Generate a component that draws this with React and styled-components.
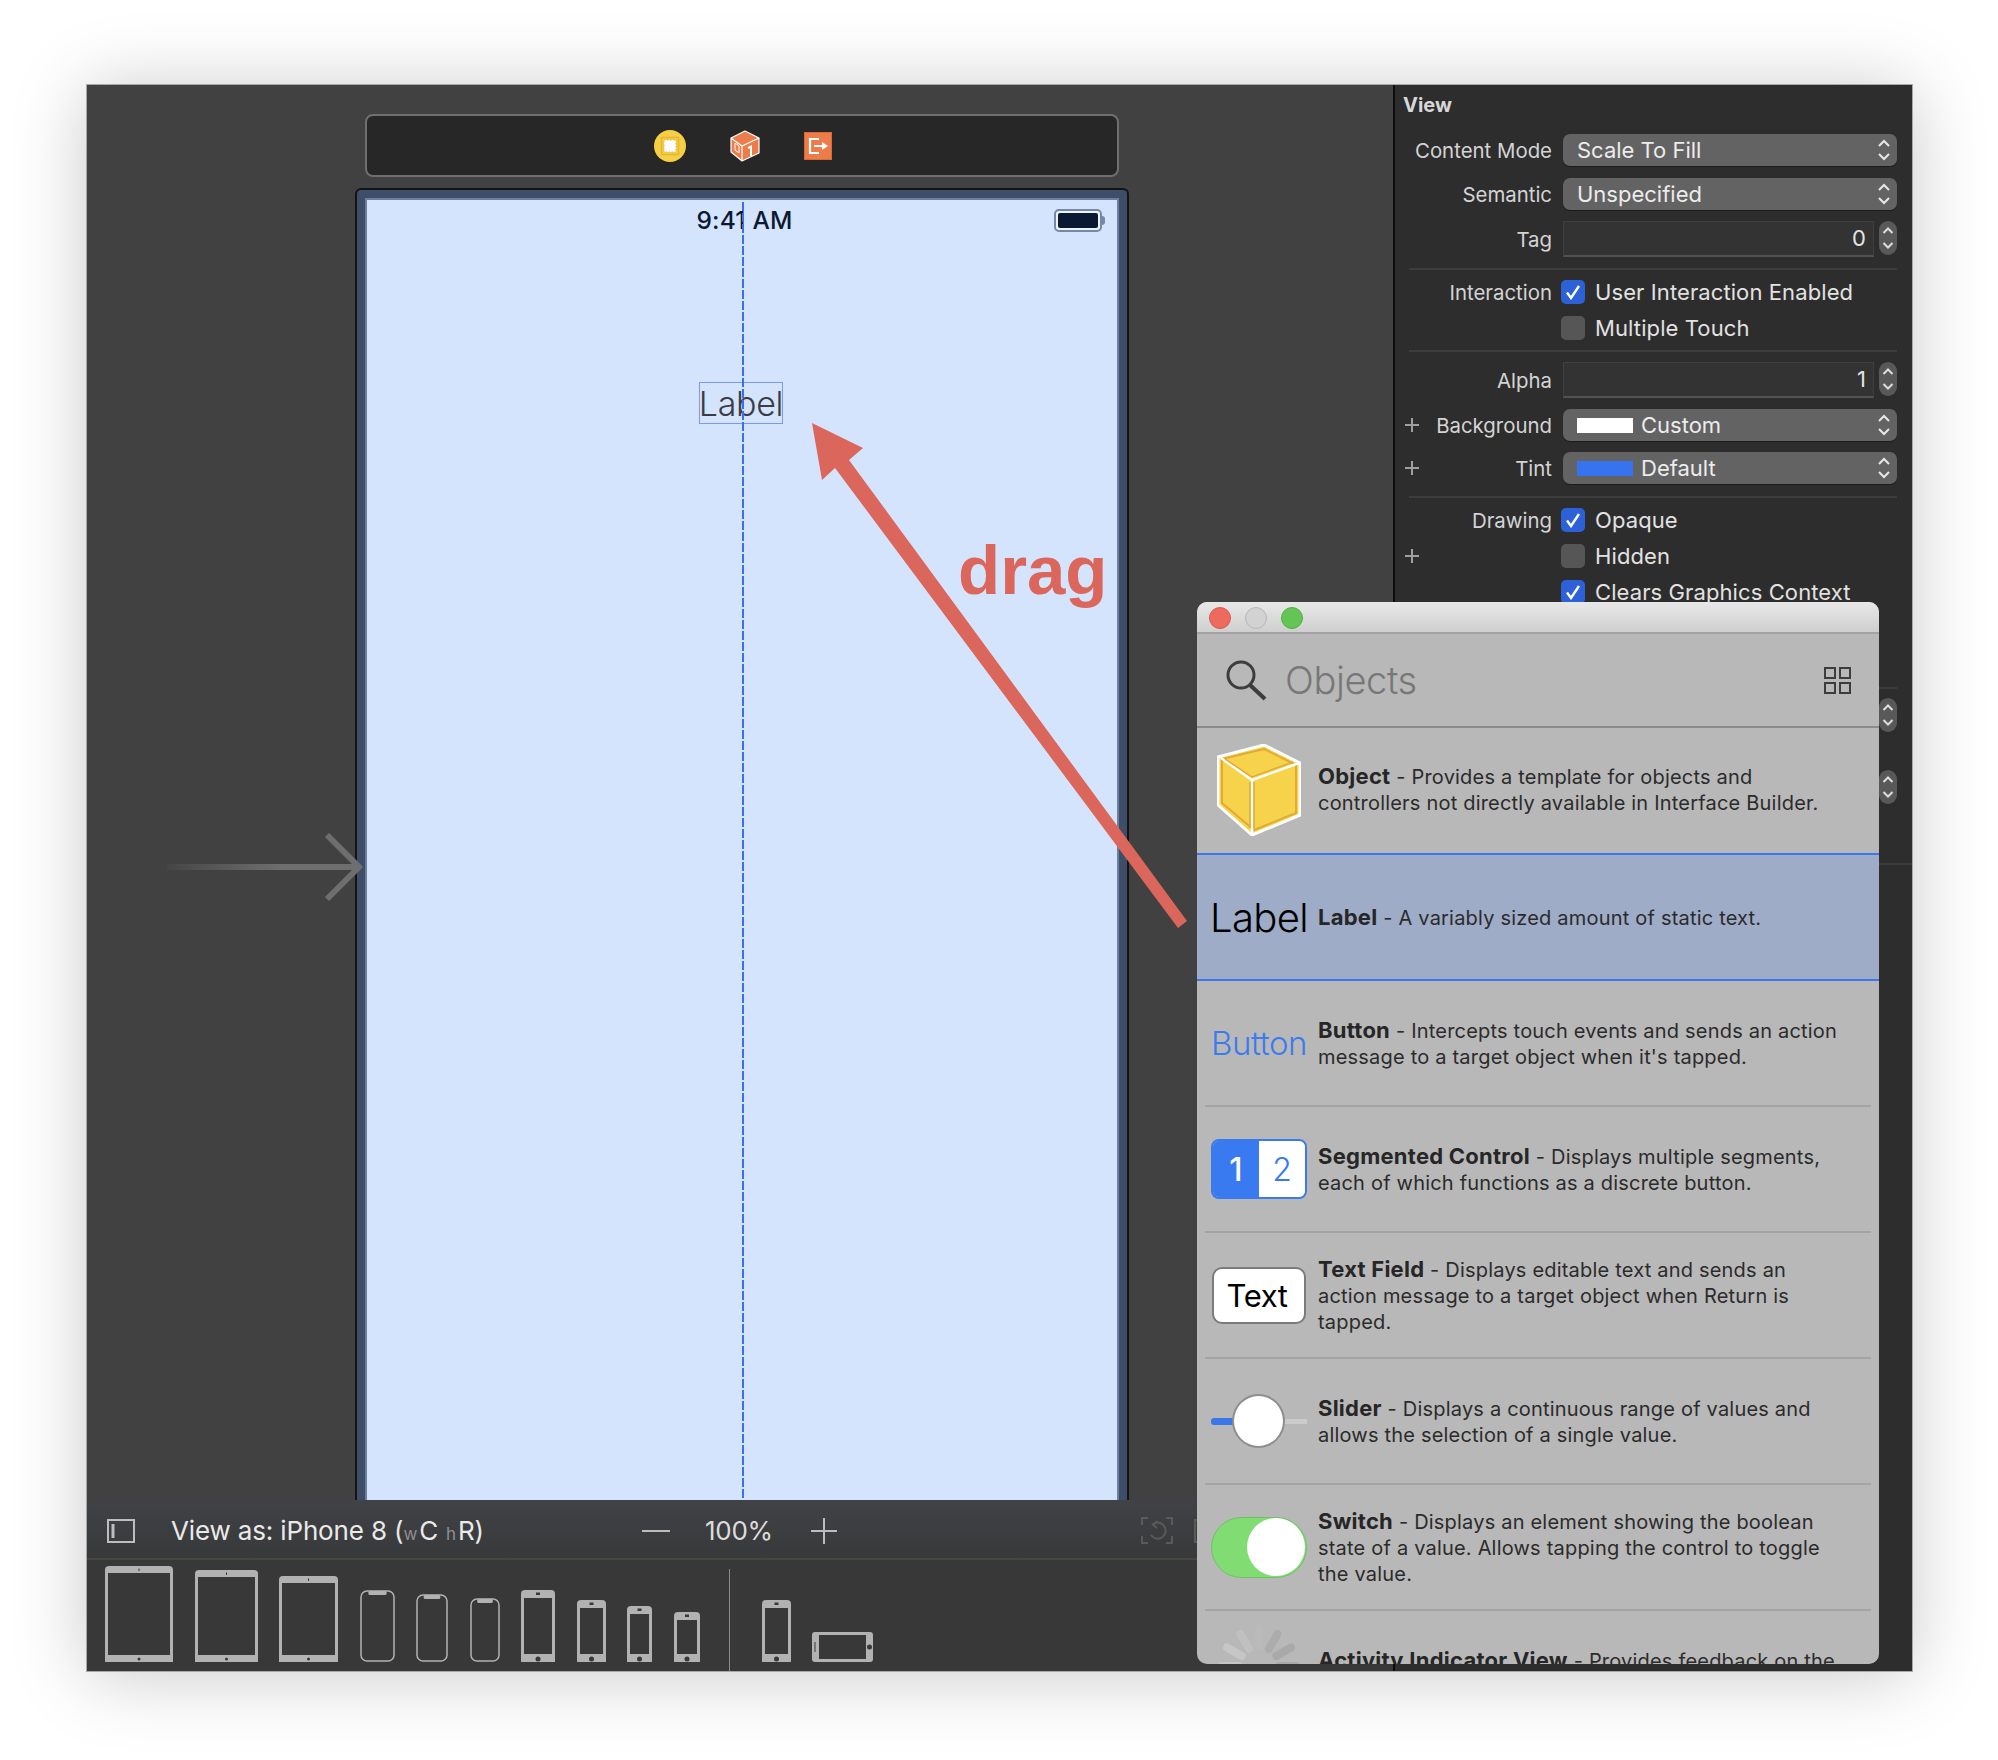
import React from 'react';
import styled, { createGlobalStyle } from 'styled-components';

const GlobalStyle = createGlobalStyle`
  html, body { margin: 0; padding: 0; background: #fff; }
  body { font-family: Inter, "Noto Sans", sans-serif; width: 1998px; height: 1760px; overflow: hidden; }
`;

const Page = styled.div`
  width: 1998px;
  height: 1760px;
  padding: 85px 0 0 87px;
  box-sizing: border-box;
`;

const Window = styled.div`
  position: relative;
  width: 1825px;
  height: 1586px;
  display: flex;
  box-shadow: 0 0 0 1px #a8a8a8, 0 4px 70px rgba(0, 0, 0, 0.22);
`;

/* canvas */
const Canvas = styled.div`
  width: 1306px;
  display: flex;
  flex-direction: column;
  background: #414141;
  border-right: 2px solid #0c0c0c;
`;

const Stage = styled.div`
  position: relative;
  flex: 1;
  min-height: 0;
  overflow: hidden;
  padding: 29px 0 0 268px;
  display: flex;
  flex-direction: column;
`;

const Dock = styled.div`
  box-sizing: border-box;
  width: 754px;
  height: 63px;
  margin-left: 10px;
  background: #272727;
  border: 2px solid #6f6f6f;
  border-radius: 8px;
  display: flex;
  align-items: center;
  justify-content: center;
  gap: 44px;
  padding-left: 1px;
`;

const Phone = styled.div`
  flex: 1;
  box-sizing: border-box;
  width: 774px;
  margin-top: 11px;
  background: #3f4e68;
  border: 2px solid #141414;
  border-bottom: 0;
  border-radius: 6px 6px 0 0;
  padding: 8px 8px 0;
  display: flex;
`;

const Screen = styled.div`
  position: relative;
  flex: 1;
  background: #d5e4fd;
  border: 2px solid #6d7f9f;
  border-bottom: 0;
  display: flex;
  justify-content: center;
`;

const StatusTime = styled.div`
  margin: 6px 0 0 5px;
  font-size: 24.5px;
  line-height: 28px;
  font-weight: 500;
  color: #0b1a33;
  letter-spacing: 0.2px;
`;

const Battery = styled.div`
  position: absolute;
  top: 9px;
  right: 15px;
  box-sizing: border-box;
  width: 48px;
  height: 23px;
  border: 2px solid #7688a8;
  border-radius: 5px;
  padding: 2px;
  background: #eef3fd;
  &::before {
    content: '';
    display: block;
    height: 100%;
    background: #0b1a33;
    border-radius: 2px;
  }
  &::after {
    content: '';
    position: absolute;
    top: 5px;
    right: -5px;
    width: 3px;
    height: 9px;
    background: #7688a8;
    border-radius: 0 3px 3px 0;
  }
`;

const GuideLine = styled.div`
  position: absolute;
  top: 2px;
  bottom: 0;
  left: 375px;
  width: 2px;
  background: repeating-linear-gradient(to bottom, #3a6ff0 0 9px, transparent 9px 11px);
`;

const DroppedLabel = styled.div`
  position: absolute;
  top: 182px;
  left: 332px;
  box-sizing: border-box;
  width: 84px;
  height: 42px;
  border: 1.5px solid #7e96f5;
  display: flex;
  align-items: center;
  justify-content: center;
  font-size: 34px;
  font-weight: 300;
  color: #3a3d47;
  letter-spacing: -0.3px;
`;

const EntryArrow = styled.svg`
  position: absolute;
  left: 80px;
  top: 740px;
`;

/* bottom bar */
const BottomBar = styled.div`
  height: 171px;
  flex: none;
  display: flex;
  flex-direction: column;
  background: #383838;
`;

const ZoomBar = styled.div`
  height: 60px;
  flex: none;
  display: flex;
  align-items: center;
  padding: 3px 0 0 20px;
  box-sizing: border-box;
  background: linear-gradient(#414246, #38393a);
  border-bottom: 2px solid #45463f;
  color: #eaeaea;
`;

const ViewAs = styled.div`
  margin-left: 36px;
  font-size: 26px;
  width: 312px;
  white-space: nowrap;
  letter-spacing: -0.15px;
`;

const SizeClass = styled.span`
  font-size: 17px;
  color: #8d9094;
  margin: 0 2px 0 ${(p) => p.$left}px;
`;

const ZoomValue = styled.div`
  font-size: 26px;
  width: 67px;
  margin: 0 39px 0 35px;
  color: #dcdcdc;
  letter-spacing: -0.3px;
  text-align: center;
`;

const ZoomMinus = styled.div`
  margin-left: 159px;
  width: 28px;
  height: 2px;
  background: #bdbdbd;
`;

const ZoomPlus = styled.div`
  position: relative;
  width: 26px;
  height: 26px;
  &::before, &::after {
    content: '';
    position: absolute;
    background: #bdbdbd;
  }
  &::before { left: 0; right: 0; top: 12px; height: 2px; }
  &::after { top: 0; bottom: 0; left: 12px; width: 2px; }
`;

const Tray = styled.div`
  flex: 1;
  display: flex;
  align-items: flex-end;
  gap: 21.5px;
  padding: 0 0 9px 18px;
`;

const TraySeparator = styled.div`
  width: 1px;
  height: 102px;
  margin: 0 10px -9px 8px;
  background: #8a8a8a;
`;

/* inspector */
const Inspector = styled.div`
  position: relative;
  flex: 1;
  background: #2d2d2d;
  color: #dcdcdc;
  font-size: 20.4px;
  padding-right: 15px;
  display: flex;
  flex-direction: column;
`;

const InspectorTitle = styled.div`
  height: 40px;
  line-height: 40px;
  padding-left: 8px;
  font-size: 20px;
  font-weight: 700;
  color: #d8d8d8;
`;

const Row = styled.div`
  display: grid;
  grid-template-columns: 157px 334px;
  column-gap: 11px;
  align-items: center;
  height: ${(p) => p.$h}px;
  margin-top: ${(p) => p.$top}px;
`;

const RowLabel = styled.div`
  display: flex;
  justify-content: flex-end;
  align-items: center;
  position: relative;
  color: #d4d4d4;
  white-space: nowrap;
`;

const Plus = styled.span`
  position: absolute;
  left: 10px;
  top: 50%;
  margin-top: -7px;
  width: 14px;
  height: 14px;
  background:
    linear-gradient(#a0a0a0, #a0a0a0) center / 14px 2px no-repeat,
    linear-gradient(#a0a0a0, #a0a0a0) center / 2px 14px no-repeat;
`;

const Popup = styled.div`
  position: relative;
  height: 32px;
  background: #636363;
  border-radius: 7px;
  box-shadow: 0 1px 1px rgba(0, 0, 0, 0.4);
  padding-left: 14px;
  display: flex;
  align-items: center;
  gap: 8px;
  font-size: 22px;
  color: #ececec;
  svg { position: absolute; right: 7px; top: 5px; }
`;

const Swatch = styled.span`
  width: 56px;
  height: 15px;
  background: ${(p) => p.$color};
`;

const FieldRow = styled.div`
  display: flex;
  gap: 5px;
  height: 36px;
`;

const NumberField = styled.div`
  flex: 1;
  box-sizing: border-box;
  background: #333;
  border: 1px solid #3f3f3f;
  border-bottom: 2px solid #525252;
  text-align: right;
  padding-right: 7px;
  font-size: 22px;
  line-height: 33px;
  color: #e4e4e4;
`;

const Stepper = styled.div`
  width: 18px;
  height: 34px;
  background: #595959;
  border-radius: 9px;
  display: flex;
  align-items: center;
  justify-content: center;
`;

const FloatingStepper = styled(Stepper)`
  position: absolute;
  right: 15px;
  top: ${(p) => p.$top}px;
`;

const Divider = styled.div`
  margin: ${(p) => p.$top}px 0 0 14px;
  height: 2px;
  background: #3d3d3d;
`;

const EdgeRule = styled.div`
  position: absolute;
  left: 14px;
  right: ${(p) => p.$right}px;
  top: ${(p) => p.$top}px;
  height: 2px;
  background: #3d3d3d;
`;

const CheckWrap = styled.div`
  display: flex;
  align-items: center;
  gap: 10px;
  margin-left: -2px;
  font-size: 22px;
  letter-spacing: 0.1px;
  color: #e2e2e2;
  white-space: nowrap;
`;

const CheckBox = styled.span`
  width: 24px;
  height: 24px;
  flex: none;
  border-radius: 5px;
  background: ${(p) => (p.$on ? '#2c61d8' : '#565656')};
  display: flex;
  align-items: center;
  justify-content: center;
`;

/* objects library */
const Library = styled.div`
  position: absolute;
  left: 1110px;
  top: 517px;
  width: 682px;
  height: 1062px;
  background: #b8b8b8;
  border-radius: 10px;
  overflow: hidden;
  display: flex;
  flex-direction: column;
  font-family: Inter, sans-serif;
`;

const TitleBar = styled.div`
  flex: none;
  padding: 5px 0 0 12px;
  height: 25px;
  display: flex;
  gap: 14px;
  background: linear-gradient(#e8e8e8, #cfcfcf);
  border-bottom: 2px solid #a3a3a3;
`;

const Light = styled.span`
  width: 22px;
  height: 22px;
  border-radius: 50%;
  box-sizing: border-box;
  background: ${(p) => p.$color};
  border: 1px solid ${(p) => p.$edge};
`;

const SearchRow = styled.div`
  height: 92px;
  flex: none;
  display: flex;
  align-items: center;
  padding: 0 28px 0 28px;
  border-bottom: 2px solid #8b8b8b;
`;

const SearchText = styled.div`
  flex: 1;
  margin-left: 18px;
  font-size: 38px;
  font-weight: 300;
  color: #777;
  letter-spacing: -0.4px;
`;

const ObjectRow = styled.div`
  position: relative;
  height: ${(p) => p.$h}px;
  flex: none;
  display: grid;
  grid-template-columns: 96px 1fr;
  column-gap: 11px;
  align-items: center;
  padding-left: 14px;
  background: ${(p) => (p.$selected ? '#9eacc7' : 'transparent')};
  border-bottom: 2px solid ${(p) => (p.$selected ? '#3a78f0' : 'transparent')};
  border-top: ${(p) => (p.$selected ? '2px solid #3a78f0' : '0')};
  ${(p) =>
    p.$rule &&
    `&::after {
      content: '';
      position: absolute;
      left: 8px;
      right: 8px;
      bottom: -2px;
      height: 2px;
      background: #a4a4a4;
    }`}
`;

const Thumb = styled.div`
  display: flex;
  align-items: center;
  justify-content: center;
  width: 96px;
  min-height: 40px;
  white-space: nowrap;
`;

const BigLabel = styled.div`
  font-size: 40px;
  font-weight: 300;
  color: #000;
  letter-spacing: -0.6px;
`;

const BigButton = styled.div`
  font-size: 33px;
  font-weight: 300;
  color: #3b7bf0;
  letter-spacing: -0.4px;
`;

const Segments = styled.div`
  box-sizing: border-box;
  width: 96px;
  height: 60px;
  border: 2px solid #3a7af0;
  border-radius: 8px;
  overflow: hidden;
  display: flex;
  font-size: 32px;
`;

const Segment = styled.div`
  flex: 1;
  display: flex;
  align-items: center;
  justify-content: center;
  background: ${(p) => (p.$on ? '#3a7af0' : '#fff')};
  color: ${(p) => (p.$on ? '#fff' : '#3a7af0')};
  font-weight: ${(p) => (p.$on ? 500 : 300)};
`;

const TextBox = styled.div`
  box-sizing: border-box;
  width: 94px;
  height: 57px;
  border: 2px solid #7b7b7b;
  border-radius: 10px;
  padding-right: 4px;
  background: #fff;
  color: #000;
  font-size: 31px;
  display: flex;
  align-items: center;
  justify-content: center;
  letter-spacing: -0.4px;
`;

const SliderThumb = styled.div`
  position: relative;
  width: 96px;
  height: 54px;
  &::before {
    content: '';
    position: absolute;
    left: 0;
    top: 24px;
    width: 30px;
    height: 7px;
    background: #3a78e8;
    border-radius: 3px;
  }
  &::after {
    content: '';
    position: absolute;
    right: 0;
    top: 25px;
    width: 30px;
    height: 5px;
    background: #cbcbcb;
  }
`;

const SliderKnob = styled.div`
  position: absolute;
  z-index: 1;
  left: 21px;
  top: 0;
  box-sizing: border-box;
  width: 53px;
  height: 54px;
  border-radius: 50%;
  background: #fff;
  border: 2px solid #8e8e8e;
`;

const SwitchTrack = styled.div`
  box-sizing: border-box;
  width: 96px;
  height: 61px;
  border-radius: 31px;
  background: #82dc74;
  border: 1px solid #6fc262;
  display: flex;
  justify-content: flex-end;
  align-items: center;
  padding-right: 1px;
  &::after {
    content: '';
    width: 58px;
    height: 58px;
    border-radius: 50%;
    background: #fff;
  }
`;

const SpinnerSvg = styled.svg`
  margin-top: -14px;
`;

const Description = styled.div`
  font-size: 20px;
  line-height: 26px;
  color: #2b2b2b;
  letter-spacing: 0.2px;
  white-space: nowrap;
  b { font-size: 22px; font-weight: 700; color: #262626; letter-spacing: 0.25px; }
`;

const AnnotationLayer = styled.svg`
  position: absolute;
  left: 0;
  top: 0;
  pointer-events: none;
`;

const DragWord = styled.div`
  position: absolute;
  left: 871px;
  top: 446px;
  font-family: "Liberation Sans", Arial, sans-serif;
  font-weight: 700;
  font-size: 69px;
  line-height: 80px;
  color: #db665b;
`;

const Updown = () => (
  <svg width="12" height="22" viewBox="0 0 12 22" fill="none" stroke="#e8e8e8" strokeWidth="2">
    <path d="M1 7l5-5 5 5M1 15l5 5 5-5" />
  </svg>
);

const StepperGlyph = () => (
  <svg width="12" height="24" viewBox="0 0 12 24" fill="none" stroke="#dedede" strokeWidth="2">
    <path d="M1.5 7l4.5-4.5 4.5 4.5M1.5 17l4.5 4.5 4.5-4.5" />
  </svg>
);

const Tick = () => (
  <svg width="16" height="16" viewBox="0 0 16 16" fill="none" stroke="#fff" strokeWidth="2.4">
    <path d="M2 8.5l4 5.5 8-12" />
  </svg>
);

const Check = ({ on, children }) => (
  <CheckWrap>
    <CheckBox $on={on}>{on && <Tick />}</CheckBox>
    {children}
  </CheckWrap>
);

const SelectRow = ({ label, plus, top, children }) => (
  <Row $h={32} $top={top}>
    <RowLabel>{plus && <Plus />}{label}</RowLabel>
    <Popup>{children}<Updown /></Popup>
  </Row>
);

const NumberRow = ({ label, value, top }) => (
  <Row $h={36} $top={top}>
    <RowLabel>{label}</RowLabel>
    <FieldRow>
      <NumberField>{value}</NumberField>
      <Stepper><StepperGlyph /></Stepper>
    </FieldRow>
  </Row>
);

const CheckRow = ({ label, plus, on, top, children }) => (
  <Row $h={24} $top={top}>
    <RowLabel>{plus && <Plus />}{label}</RowLabel>
    <Check on={on}>{children}</Check>
  </Row>
);

const SceneIcon = () => (
  <svg width="32" height="32" viewBox="0 0 32 32">
    <circle cx="16" cy="16" r="16" fill="#f6cf45" />
    <rect x="7.5" y="7.5" width="17" height="17" fill="none" stroke="#e3b636" strokeWidth="1.5" />
    <rect x="10" y="10" width="12" height="12" fill="#fff" stroke="#e3b636" strokeDasharray="1.5 1.5" />
  </svg>
);

const CubeIcon = () => (
  <svg width="30" height="32" viewBox="0 0 30 32">
    <path d="M15 1L29 8V23L12 31 1 22V8Z" fill="#ec7d4a" stroke="#fff" strokeWidth="1.2" strokeLinejoin="round" />
    <path d="M1 8l11 8 17-8M12 16v15" fill="none" stroke="#fff" strokeWidth="1.2" />
    <path d="M5 13l4 3v7l-4-3z" fill="none" stroke="#fff" strokeWidth="1" />
    <path d="M18 18l3-1.500V26" fill="none" stroke="#fff" strokeWidth="2" />
  </svg>
);

const ExitIcon = () => (
  <svg width="28" height="28" viewBox="0 0 28 28">
    <rect x="0.500" y="0.500" width="27" height="27" fill="#ec7d4a" stroke="#d96a38" />
    <path d="M15 7H6v14h9M10 14h9" fill="none" stroke="#fff" strokeWidth="2.200" />
    <path d="M18 10l6 4-6 4z" fill="#fff" />
  </svg>
);

const Device = ({ w, h, kind }) => {
  const c = '#b2b2b2';
  if (kind === 'notch') {
    return (
      <svg width={w} height={h} viewBox={`0 0 ${w} ${h}`}>
        <rect x="1" y="1" width={w - 2} height={h - 2} rx="6" fill="none" stroke={c} strokeWidth="1.500" />
        <rect x={w * 0.24} y="1" width={w * 0.52} height="4" rx="1.500" fill={c} />
      </svg>
    );
  }
  if (kind === 'land') {
    return (
      <svg width={w} height={h} viewBox={`0 0 ${w} ${h}`}>
        <rect width={w} height={h} rx="3" fill={c} />
        <rect x="7" y="3" width={w - 14} height={h - 6} fill="#383838" />
        <rect x="2.500" y={h / 2 - 5} width="1" height="10" fill="#383838" />
        <circle cx={w - 3.500} cy={h / 2} r="2.500" fill="#383838" />
      </svg>
    );
  }
  const tablet = kind === 'tablet';
  const band = tablet ? 7 : 8;
  return (
    <svg width={w} height={h} viewBox={`0 0 ${w} ${h}`}>
      <path d={`M4 0H${w - 4}Q${w} 0 ${w} 4V${h}H0V4Q0 0 4 0Z`} fill={c} />
      <rect x="3" y={band} width={w - 6} height={h - band * 2} fill="#383838" />
      {tablet
        ? <rect x={w / 2 - 0.500} y="2.500" width="1" height="2.500" fill="#383838" />
        : <rect x={w / 2 - 2} y="2.500" width="4" height="2.500" fill="#383838" />}
      <circle cx={w / 2} cy={h - 3} r={tablet ? 1.500 : 2.500} fill="#383838" />
    </svg>
  );
};

const devices = [
  { w: 68, h: 96, kind: 'tablet' },
  { w: 63, h: 92, kind: 'tablet' },
  { w: 59, h: 86, kind: 'tablet' },
  { w: 35, h: 72, kind: 'notch' },
  { w: 32, h: 68, kind: 'notch' },
  { w: 30, h: 64, kind: 'notch' },
  { w: 34, h: 72, kind: 'phone' },
  { w: 29, h: 62, kind: 'phone' },
  { w: 25, h: 56, kind: 'phone' },
  { w: 26, h: 50, kind: 'phone' },
];

const CubeThumb = () => (
  <svg width="84" height="92" viewBox="0 0 84 92">
    <path d="M47 1L83 19V71L35 91 1 61V13Z" fill="#f7d34c" stroke="#fff" strokeWidth="3" strokeLinejoin="round" />
    <path d="M47 5L79 21V69L37 86 5 59V15Z" fill="none" stroke="#e0aa35" strokeWidth="2" strokeLinejoin="round" />
    <path d="M4 14L35 36 82 19M35 36V90" fill="none" stroke="#fff" strokeWidth="2.500" />
    <path d="M8 15L35 33 76 18M37 38V84M33 38V84" fill="none" stroke="#e0aa35" strokeWidth="1.500" />
  </svg>
);

// only the top of the wheel shows, the rest is under the panel edge
const spinnerRays = { 0: '#bababa', 1: '#acacac', 2: '#a9a9a9', 3: '#a9a9a9', 9: '#c6c6c6', 10: '#c6c6c6', 11: '#c0c0c0' };

const Spinner = () => (
  <SpinnerSvg width="96" height="96" viewBox="-48 -48 96 96" strokeWidth="8" strokeLinecap="round">
    {Array.from({ length: 12 }).map((_, i) => (
      <line
        key={i}
        x1="0"
        y1="-20"
        x2="0"
        y2="-37"
        stroke={spinnerRays[i] || '#bcbcbc'}
        transform={`rotate(${i * 30})`}
      />
    ))}
  </SpinnerSvg>
);

const items = [
  { h: 123, thumb: <CubeThumb />, name: 'Object', lines: ['Provides a template for objects and', 'controllers not directly available in Interface Builder.'] },
  { h: 124, thumb: <BigLabel>Label</BigLabel>, name: 'Label', selected: true, lines: ['A variably sized amount of static text.'] },
  { h: 124, thumb: <BigButton>Button</BigButton>, name: 'Button', rule: true, lines: ['Intercepts touch events and sends an action', "message to a target object when it's tapped."] },
  {
    h: 124,
    thumb: <Segments><Segment $on>1</Segment><Segment>2</Segment></Segments>,
    name: 'Segmented Control',
    rule: true,
    lines: ['Displays multiple segments,', 'each of which functions as a discrete button.'],
  },
  { h: 124, thumb: <TextBox>Text</TextBox>, name: 'Text Field', rule: true, lines: ['Displays editable text and sends an', 'action message to a target object when Return is', 'tapped.'] },
  { h: 124, thumb: <SliderThumb><SliderKnob /></SliderThumb>, name: 'Slider', rule: true, lines: ['Displays a continuous range of values and', 'allows the selection of a single value.'] },
  { h: 124, thumb: <SwitchTrack />, name: 'Switch', rule: true, lines: ['Displays an element showing the boolean', 'state of a value. Allows tapping the control to toggle', 'the value.'] },
  { h: 124, thumb: <Spinner />, name: 'Activity Indicator View', lines: ['Provides feedback on the', 'progress of a task or process of unknown duration.'] },
];

const App = () => (
  <Page>
    <GlobalStyle />
    <Window>
      <Canvas>
        <Stage>
          <Dock>
            <SceneIcon />
            <CubeIcon />
            <ExitIcon />
          </Dock>
          <Phone>
            <Screen>
              <StatusTime>9:41 AM</StatusTime>
              <Battery />
              <DroppedLabel>Label</DroppedLabel>
              <GuideLine />
            </Screen>
          </Phone>
          <EntryArrow width="200" height="80" viewBox="0 0 200 80">
            <defs>
              <linearGradient id="entry" x1="0" x2="1" y1="0" y2="0">
                <stop offset="0" stopColor="#6e6e6e" stopOpacity="0.1" />
                <stop offset="0.6" stopColor="#6e6e6e" />
              </linearGradient>
            </defs>
            <rect x="0" y="39" width="190" height="6" fill="url(#entry)" />
            <path d="M160 10L192 42 160 74" fill="none" stroke="#6e6e6e" strokeWidth="6" />
          </EntryArrow>
        </Stage>
        <BottomBar>
          <ZoomBar>
            <svg width="28" height="24" viewBox="0 0 28 24" fill="none" stroke="#bdbdbd" strokeWidth="2">
              <rect x="1" y="1" width="26" height="22" />
              <path d="M6 5v14" strokeWidth="3" />
            </svg>
            <ViewAs>
              View as: iPhone 8 (<SizeClass $left={0}>w</SizeClass>C<SizeClass $left={8}>h</SizeClass>R)
            </ViewAs>
            <ZoomMinus />
            <ZoomValue>100%</ZoomValue>
            <ZoomPlus />
            <svg style={{ marginLeft: 304 }} width="32" height="27" viewBox="0 0 32 27" fill="none" stroke="#5a5a5a" strokeWidth="2">
              <path d="M1 8V1h6M25 1h6v7M1 19v7h6M25 26h6v-7" />
              <path d="M11 8a8 8 0 1 1-1 10M16 4l-4 4 4 3" />
            </svg>
            <svg style={{ marginLeft: 21 }} width="20" height="24" viewBox="0 0 20 24" fill="none" stroke="#5a5a5a" strokeWidth="2">
              <rect x="1" y="1" width="20" height="22" />
            </svg>
          </ZoomBar>
          <Tray>
            {devices.map((d, i) => <Device key={i} {...d} />)}
            <TraySeparator />
            <Device w={29} h={62} kind="phone" />
            <Device w={61} h={30} kind="land" />
          </Tray>
        </BottomBar>
      </Canvas>

      <Inspector>
        <InspectorTitle>View</InspectorTitle>
        <SelectRow label="Content Mode" top={9}>Scale To Fill</SelectRow>
        <SelectRow label="Semantic" top={12}>Unspecified</SelectRow>
        <NumberRow label="Tag" value="0" top={11} />
        <Divider $top={11} />
        <CheckRow label="Interaction" on top={9}>User Interaction Enabled</CheckRow>
        <CheckRow top={12}>Multiple Touch</CheckRow>
        <Divider $top={11} />
        <NumberRow label="Alpha" value="1" top={10} />
        <SelectRow label="Background" plus top={11}><Swatch $color="#fff" /> Custom</SelectRow>
        <SelectRow label="Tint" plus top={11}><Swatch $color="#3574ee" /> Default</SelectRow>
        <Divider $top={12} />
        <CheckRow label="Drawing" on top={9}>Opaque</CheckRow>
        <CheckRow plus top={12}>Hidden</CheckRow>
        <CheckRow on top={12}>Clears Graphics Context</CheckRow>
        <EdgeRule $top={602} $right={15} />
        <FloatingStepper $top={613}><StepperGlyph /></FloatingStepper>
        <FloatingStepper $top={685}><StepperGlyph /></FloatingStepper>
        <EdgeRule $top={778} $right={0} />
      </Inspector>

      <AnnotationLayer width="1825" height="1586" viewBox="0 0 1825 1586">
        <polygon
          points="725,338 776,363 762,375 1100,836 1091,843 748,383 735,395"
          fill="#db665b"
        />
      </AnnotationLayer>
      <DragWord>drag</DragWord>

      <Library>
        <TitleBar>
          <Light $color="#ee6a5f" $edge="#d9574d" />
          <Light $color="#d2d2d2" $edge="#b8b8b8" />
          <Light $color="#62c554" $edge="#52ae45" />
        </TitleBar>
        <SearchRow>
          <svg width="42" height="42" viewBox="0 0 42 42" fill="none" stroke="#3d3d3d">
            <circle cx="16" cy="16" r="13" strokeWidth="3" />
            <path d="M25 26l15 14" strokeWidth="4" />
          </svg>
          <SearchText>Objects</SearchText>
          <svg width="27" height="27" viewBox="0 0 27 27" fill="none" stroke="#3d3d3d" strokeWidth="2">
            <rect x="1" y="1" width="10" height="10" />
            <rect x="16" y="1" width="10" height="10" />
            <rect x="1" y="16" width="10" height="10" />
            <rect x="16" y="16" width="10" height="10" />
          </svg>
        </SearchRow>
        {items.map((it) => (
          <ObjectRow key={it.name} $h={it.h} $selected={it.selected} $rule={it.rule}>
            <Thumb>{it.thumb}</Thumb>
            <Description>
              <b>{it.name}</b> - {it.lines[0]}
              {it.lines.slice(1).map((l) => <div key={l}>{l}</div>)}
            </Description>
          </ObjectRow>
        ))}
      </Library>
    </Window>
  </Page>
);

export default App;
